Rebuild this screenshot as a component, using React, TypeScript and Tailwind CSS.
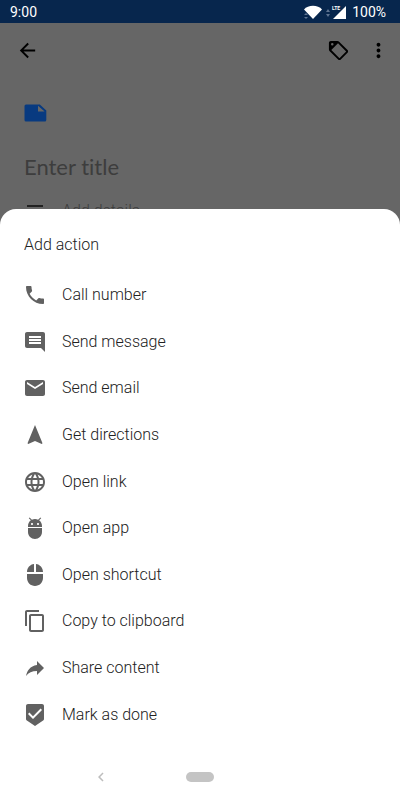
import React from 'react'
import {
    MdAdb,
    MdArrowBack,
    MdBeenhere,
    MdChevronLeft,
    MdComment,
    MdContentCopy,
    MdEmail,
    MdLanguage,
    MdMoreVert,
    MdMouse,
    MdNavigation,
    MdPhone,
    MdReply,
} from 'react-icons/md'

const actions = [
    { label: 'Call number', icon: <MdPhone /> },
    { label: 'Send message', icon: <MdComment /> },
    { label: 'Send email', icon: <MdEmail /> },
    { label: 'Get directions', icon: <MdNavigation /> },
    { label: 'Open link', icon: <MdLanguage /> },
    { label: 'Open app', icon: <MdAdb /> },
    { label: 'Open shortcut', icon: <MdMouse /> },
    { label: 'Copy to clipboard', icon: <MdContentCopy /> },
    { label: 'Share content', icon: <MdReply className="-scale-x-100" /> },
    { label: 'Mark as done', icon: <MdBeenhere /> },
]

const StatusBar = () => (
    <div className="flex h-[23px] items-center justify-between bg-[#07264d] pr-[14px] pl-[10px] text-sm text-white">
        <span>9:00</span>
        <div className="flex items-center">
            {/* wifi, data arrows, signal */}
            <svg className="mr-[6px] h-[18px] w-[44px]" viewBox="0 0 44 18" fill="white">
                <path d="M2 6.5 C6 1.5 16 1.5 20 6.5 L11 16 Z" />
                <path d="M44 3 V16 H31 Z" />
                <path d="M2 12 l2 -2 2 2z M2 14 l2 2 2 -2z M24 9 l2 -3 2 3z M24 11 l2 3 2 -3z" fill="#5d7391" />
                <text x="30" y="7" fontSize="5" fontWeight="700">LTE</text>
            </svg>
            <span>100%</span>
        </div>
    </div>
)

const HomeScreen = () => {
    return (
        <main className="flex min-h-screen flex-col bg-[#666] font-['Roboto',sans-serif] text-black">
            <StatusBar />

            {/* EDITOR */}
            <header className="flex h-[55px] items-center pr-[10px] pl-4">
                <button type="button" aria-label="Back" className="text-[23px]">
                    <MdArrowBack />
                </button>
                <button type="button" aria-label="Add tag" className="mr-[17px] ml-auto">
                    <svg className="size-[23px]" viewBox="0 0 24 24">
                        <path
                            fillRule="evenodd"
                            d="M21.41 11.58l-9-9C12.04 2.21 11.53 2 11 2H4c-1.1 0-2 .9-2 2v7c0 .55.22 1.05.59 1.42l9 9c.36.36.86.58 1.41.58s1.05-.22 1.41-.59l7-7c.37-.36.59-.86.59-1.41s-.23-1.06-.59-1.42zM13 20l-8.5-8.5 7-7L20 13l-7 7zM5.5 4.2a1.3 1.3 0 1 0 0 2.6 1.3 1.3 0 0 0 0-2.6z"
                        />
                    </svg>
                </button>
                <button type="button" aria-label="More options" className="text-[23px]">
                    <MdMoreVert />
                </button>
            </header>

            <div className="px-6 pt-[26px]">
                <svg className="h-[18px] w-[23px]" viewBox="0 0 23 18" fill="#083a80">
                    <path fillRule="evenodd" d="M2 0.5 H15.8 L22.3 6.5 V16 Q22.3 17.5 20.8 17.5 H2 Q0.5 17.5 0.5 16 V2 Q0.5 0.5 2 0.5 Z M14 1.8 V7.6 H20.6 Z" />
                </svg>
                <input
                    type="text"
                    aria-label="Title"
                    placeholder="Enter title"
                    className="mt-[28px] h-8 w-full font-['Lato',sans-serif] text-[22px] [font-variant-ligatures:none] outline-none placeholder:text-[#3d3d3d]"
                />
                <div className="mt-[17px] flex h-6 items-center">
                    <svg className="h-4 w-[38px]" viewBox="0 0 38 16" fill="#222">
                        <path d="M3 2h16v2H3zM3 6h16v2H3z" />
                    </svg>
                    <input
                        type="text"
                        aria-label="Details"
                        placeholder="Add details"
                        className="min-w-0 flex-1 text-base font-light outline-none placeholder:text-[#3d3d3d]"
                    />
                </div>
            </div>

            {/* BOTTOM SHEET */}
            <section className="relative -mt-[14px] flex flex-1 flex-col rounded-t-2xl bg-white text-[#212121]">
                <h2 className="px-6 pt-6 pb-[15px] text-base font-light">Add action</h2>
                <ul className="grid flex-1 auto-rows-fr">
                    {actions.map((action) => (
                        <li key={action.label} className="flex">
                            <button type="button" className="flex w-full items-center gap-[15px] px-[23px] text-left text-base font-light">
                                <span className="text-2xl text-[#616161]">{action.icon}</span>
                                {action.label}
                            </button>
                        </li>
                    ))}
                </ul>
                <nav className="mt-[15px] flex h-[47px] items-center">
                    <div className="flex flex-1 justify-center">
                        <button type="button" aria-label="Back" className="ml-4 text-lg text-[#bdbdbd]">
                            <MdChevronLeft />
                        </button>
                    </div>
                    <button type="button" aria-label="Home" className="h-[10px] w-7 rounded-full bg-[#c4c4c4]" />
                    <div className="flex-1" />
                </nav>
            </section>
        </main>
    )
}

export default HomeScreen
